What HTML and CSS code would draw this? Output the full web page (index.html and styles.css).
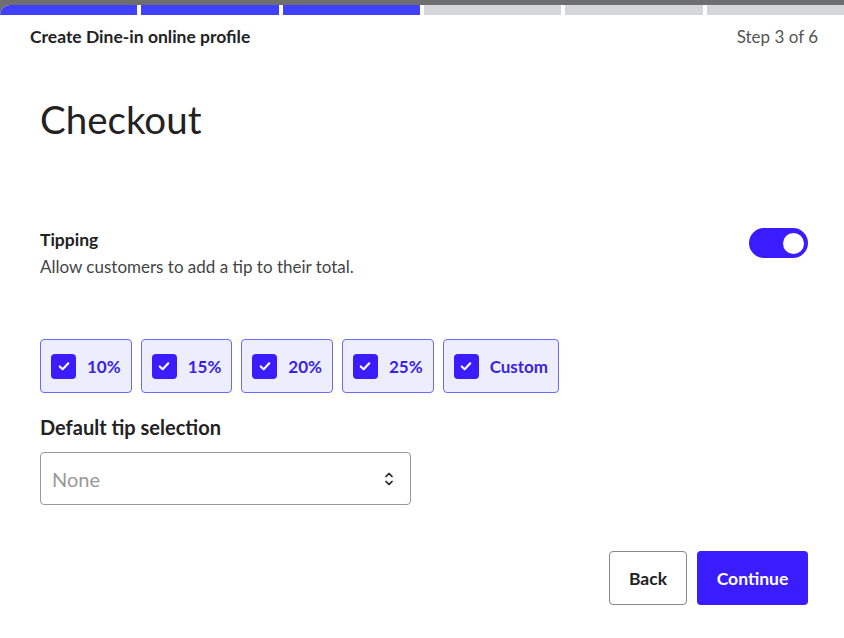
FILE: index.html
```html
<!DOCTYPE html>
<html lang="en">
<head>
    <meta charset="UTF-8">
    <meta name="viewport" content="width=device-width, initial-scale=1.0">
    <title>Create Dine-in online profile</title>
    <link rel="stylesheet" href="styles.css">
</head>
<body>
    <div class="modal">
        <!-- Progress of the wizard: 3 of 6 steps done -->
        <div class="progress">
            <span class="seg done"></span>
            <span class="seg done"></span>
            <span class="seg done"></span>
            <span class="seg"></span>
            <span class="seg"></span>
            <span class="seg"></span>
        </div>

        <header class="modal-header">
            <span class="modal-title">Create Dine-in online profile</span>
            <span class="step">Step 3 of 6</span>
        </header>

        <main class="modal-body">
            <h1>Checkout</h1>

            <section class="setting">
                <div class="setting-text">
                    <h3>Tipping</h3>
                    <p>Allow customers to add a tip to their total.</p>
                </div>
                <label class="switch">
                    <input type="checkbox" checked>
                    <span class="slider"></span>
                </label>
            </section>

            <div class="chips">
                <label class="chip"><input type="checkbox" checked><span class="box"><svg viewBox="0 0 12 12"><path d="M2.8 6.3l2.2 2.1 4.2-4.4"/></svg></span>10%</label>
                <label class="chip"><input type="checkbox" checked><span class="box"><svg viewBox="0 0 12 12"><path d="M2.8 6.3l2.2 2.1 4.2-4.4"/></svg></span>15%</label>
                <label class="chip"><input type="checkbox" checked><span class="box"><svg viewBox="0 0 12 12"><path d="M2.8 6.3l2.2 2.1 4.2-4.4"/></svg></span>20%</label>
                <label class="chip"><input type="checkbox" checked><span class="box"><svg viewBox="0 0 12 12"><path d="M2.8 6.3l2.2 2.1 4.2-4.4"/></svg></span>25%</label>
                <label class="chip"><input type="checkbox" checked><span class="box"><svg viewBox="0 0 12 12"><path d="M2.8 6.3l2.2 2.1 4.2-4.4"/></svg></span>Custom</label>
            </div>

            <h2 class="field-label">Default tip selection</h2>
            <div class="select">
                <span class="placeholder">None</span>
                <svg class="updown" viewBox="0 0 10 16"><path d="M2 5.5l3-3 3 3M2 10.5l3 3 3-3"/></svg>
            </div>

            <div class="actions">
                <button class="btn btn-secondary">Back</button>
                <button class="btn btn-primary">Continue</button>
            </div>
        </main>
    </div>
</body>
</html>
```

FILE: styles.css
```css
/* General */
body {
    margin: 0;
    background-color: #6e6e6e;
    font-family: Lato, "Open Sans", sans-serif;
    color: #222;
}

.modal {
    margin-top: 5px;
    height: 633px;
    background-color: #fff;
    border-top-left-radius: 10px;
    overflow: hidden;
}

/* Progress bar */
.progress {
    display: flex;
    gap: 4px;
    height: 10px;
}

.seg {
    flex: 1;
    background-color: #d5d6da;
}

.seg.done {
    background-color: #4040ff;
}

.modal-header {
    display: flex;
    justify-content: space-between;
    align-items: center;
    padding: 10px 26px 0 30px;
    height: 22px;
}

.modal-title {
    font-size: 17.5px;
    font-weight: bold;
    color: #222;
}

.step {
    font-size: 17px;
    color: #555;
}

.modal-body {
    padding: 0 36px 0 40px;
}

h1 {
    margin: 46px 0 0;
    font-size: 38.5px;
    font-weight: normal;
    line-height: 52px;
    color: #222;
}

/* Tipping toggle */
.setting {
    display: flex;
    justify-content: space-between;
    align-items: flex-start;
    margin-top: 83px;
}

.setting h3 {
    margin: 0;
    font-size: 17.5px;
    font-weight: bold;
    line-height: 24px;
}

.setting p {
    margin: 3px 0 0;
    font-size: 17px;
    line-height: 24px;
    color: #444;
}

.switch {
    position: relative;
    width: 59px;
    height: 30px;
}

.switch input {
    display: none;
}

.slider {
    position: absolute;
    inset: 0;
    border-radius: 15px;
    background-color: #3b1cff;
}

.slider::after {
    content: "";
    position: absolute;
    top: 4.5px;
    right: 4px;
    width: 21px;
    height: 21px;
    border-radius: 50%;
    background-color: #fff;
}

/* Tip percentages */
.chips {
    display: flex;
    gap: 9px;
    margin-top: 60px;
}

.chip {
    display: flex;
    align-items: center;
    gap: 11px;
    height: 52px;
    padding: 0 10px;
    border: 1px solid #6a6aff;
    border-radius: 4px;
    background-color: #eceefe;
    color: #3a1fe6;
    font-size: 17px;
    font-weight: bold;
    cursor: pointer;
}

.chip input {
    display: none;
}

.box {
    display: flex;
    align-items: center;
    justify-content: center;
    width: 25px;
    height: 25px;
    border-radius: 4px;
    background-color: #3b1cff;
}

.box svg {
    width: 16px;
    height: 16px;
    fill: none;
    stroke: #fff;
    stroke-width: 1.6;
    stroke-linecap: round;
    stroke-linejoin: round;
}

/* Default tip select */
.field-label {
    margin: 20px 0 0;
    font-size: 20px;
    font-weight: bold;
    line-height: 28px;
    color: #222;
}

.select {
    display: flex;
    justify-content: space-between;
    align-items: center;
    box-sizing: border-box;
    width: 371px;
    height: 53px;
    margin-top: 11px;
    padding: 0 16px 0 11px;
    border: 1px solid #999;
    border-radius: 4px;
}

.placeholder {
    font-size: 20px;
    color: #999;
}

.updown {
    width: 10px;
    height: 16px;
    fill: none;
    stroke: #222;
    stroke-width: 1.7;
    stroke-linecap: round;
    stroke-linejoin: round;
}

/* Footer buttons */
.actions {
    display: flex;
    justify-content: flex-end;
    gap: 10px;
    margin-top: 46px;
}

.btn {
    height: 54px;
    border-radius: 4px;
    font-family: inherit;
    font-size: 17.5px;
    font-weight: bold;
    cursor: pointer;
}

.btn-secondary {
    width: 78px;
    background-color: #fff;
    border: 1px solid #888;
    color: #222;
}

.btn-primary {
    width: 111px;
    background-color: #3b1cff;
    border: none;
    color: #fff;
}
```
